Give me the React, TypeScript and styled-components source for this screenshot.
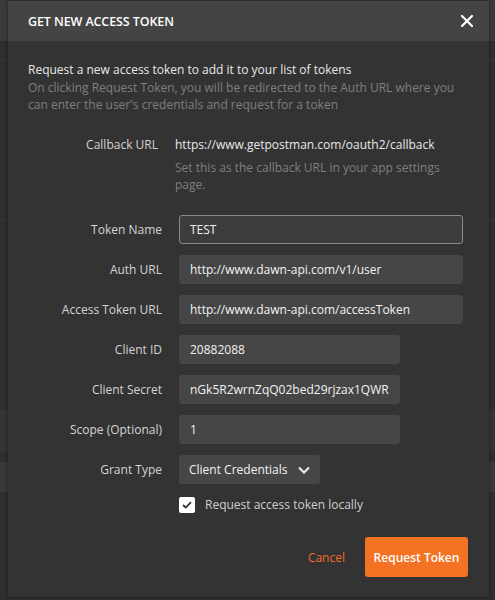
import styled, { createGlobalStyle } from 'styled-components';

const GlobalStyle = createGlobalStyle`
  html, body {
    margin: 0;
    padding: 0;
    height: 100%;
    background: #2c2c2c;
    font-family: 'Open Sans', 'Liberation Sans', sans-serif;
  }
  * { box-sizing: border-box; }
`;

// faint app behind the modal
const Backdrop = styled.div`
  position: relative;
  width: 495px;
  height: 600px;
  overflow: hidden;
  background:
    linear-gradient(#3a3a3a, #3a3a3a) 0 0 / 100% 41px no-repeat,
    linear-gradient(#383838, #383838) 0 60px / 100% 1px no-repeat,
    linear-gradient(#383838, #383838) 0 220px / 100% 1px no-repeat,
    linear-gradient(#343434, #343434) 0 410px / 100% 42px no-repeat,
    linear-gradient(#393939, #393939) 0 462px / 100% 30px no-repeat,
    #2e2e2e;
`;

const Modal = styled.div`
  position: absolute;
  top: 1px;
  left: 8px;
  width: 481px;
  height: 596px;
  background: #333333;
  box-shadow: 0 0 3px rgba(0, 0, 0, 0.5);
  display: flex;
  flex-direction: column;
`;

const Header = styled.header`
  height: 40px;
  background: #444444;
  display: flex;
  align-items: center;
  justify-content: space-between;
  padding: 0 14px 0 20px;
  color: #ffffff;
`;

const Title = styled.h1`
  margin: 0;
  font-size: 12.5px;
  font-weight: 600;
  letter-spacing: -0.1px;
`;

const Close = styled.button`
  border: 0;
  background: none;
  padding: 0;
  width: 16px;
  height: 16px;
  display: flex;
  align-items: center;
  justify-content: center;
  cursor: pointer;
`;

const Body = styled.div`
  padding: 20px 25px 20px 20px;
  display: flex;
  flex-direction: column;
  flex: 1;
`;

const Intro = styled.p`
  margin: 0;
  font-size: 12px;
  line-height: 18px;
  color: #e8e8e8;
`;

const Muted = styled.span<{ $gap?: number }>`
  display: block;
  color: #7f7f7f;
  margin-top: ${(p) => p.$gap ?? 0}px;
  line-height: 17px;
`;

const Form = styled.div`
  display: grid;
  grid-template-columns: 134px 1fr;
  column-gap: 17px;
  row-gap: 11px;
  align-items: center;
  margin-top: 23px;
`;

const Label = styled.div<{ $top?: boolean }>`
  text-align: right;
  font-size: 12px;
  color: #d4d4d4;
  align-self: ${(p) => (p.$top ? 'start' : 'center')};
  padding-right: ${(p) => (p.$top ? '4px' : '0')};
`;

const Callback = styled.div`
  margin-left: -4px;
  font-size: 12px;
  line-height: 18px;
  color: #e8e8e8;
  margin-bottom: 11px;
`;

const Input = styled.div<{ $width: number; $outlined?: boolean }>`
  width: ${(p) => p.$width}px;
  height: 29px;
  border-radius: 3px;
  background: ${(p) => (p.$outlined ? '#3c3c3c' : '#464646')};
  border: 1px solid ${(p) => (p.$outlined ? '#8a8a8a' : '#464646')};
  padding: 0 10px;
  display: flex;
  align-items: center;
  font-size: 12px;
  color: #f2f2f2;
  white-space: nowrap;
  overflow: hidden;
`;

const Select = styled.div`
  width: 141px;
  height: 29px;
  border-radius: 3px;
  background: #464646;
  padding: 0 10px;
  display: flex;
  align-items: center;
  justify-content: space-between;
  font-size: 12px;
  color: #f2f2f2;
`;

const CheckRow = styled.label`
  grid-column: 2;
  display: flex;
  align-items: center;
  gap: 10px;
  font-size: 12px;
  color: #cfcfcf;
  margin-top: 1px;
`;

const Box = styled.span`
  width: 16px;
  height: 16px;
  border-radius: 2px;
  background: #ffffff;
  display: flex;
  align-items: center;
  justify-content: center;
`;

const Footer = styled.div`
  margin-top: auto;
  display: flex;
  justify-content: flex-end;
  align-items: center;
  gap: 20px;
  margin-right: -4px;
`;

const LinkButton = styled.button`
  border: 0;
  background: none;
  padding: 0;
  font-family: inherit;
  font-size: 12px;
  color: #f26b2b;
  cursor: pointer;
`;

const Primary = styled.button`
  border: 0;
  border-radius: 3px;
  background: #f47224;
  color: #ffffff;
  font-family: inherit;
  font-size: 12px;
  font-weight: 600;
  width: 103px;
  height: 40px;
  cursor: pointer;
`;

const fields: { label: string; value: string; width: number; outlined?: boolean }[] = [
  { label: 'Token Name', value: 'TEST', width: 284, outlined: true },
  { label: 'Auth URL', value: 'http://www.dawn-api.com/v1/user', width: 284 },
  { label: 'Access Token URL', value: 'http://www.dawn-api.com/accessToken', width: 284 },
  { label: 'Client ID', value: '20882088', width: 221 },
  { label: 'Client Secret', value: 'nGk5R2wrnZqQ02bed29rjzax1QWR', width: 221 },
  { label: 'Scope (Optional)', value: '1', width: 221 },
];

function App() {
  return (
    <Backdrop>
      <GlobalStyle />
      <Modal>
        <Header>
          <Title>GET NEW ACCESS TOKEN</Title>
          <Close aria-label="Close">
            <svg width="12" height="12" viewBox="0 0 12 12">
              <path d="M1 1L11 11M11 1L1 11" stroke="#fff" strokeWidth="2.2" strokeLinecap="square" />
            </svg>
          </Close>
        </Header>
        <Body>
          <Intro>
            Request a new access token to add it to your list of tokens
            <Muted>
              On clicking Request Token, you will be redirected to the Auth URL where you can
              enter the user's credentials and request for a token
            </Muted>
          </Intro>
          <Form>
            <Label $top>Callback URL</Label>
            <Callback>
              https://www.getpostman.com/oauth2/callback
              <Muted $gap={5}>Set this as the callback URL in your app settings page.</Muted>
            </Callback>
            {fields.map((f) => (
              <>
                <Label key={f.label + 'l'}>{f.label}</Label>
                <Input key={f.label} $width={f.width} $outlined={f.outlined}>
                  {f.value}
                </Input>
              </>
            ))}
            <Label>Grant Type</Label>
            <Select>
              Client Credentials
              <svg width="12" height="8" viewBox="0 0 12 8">
                <path d="M1 1.5L6 6.5L11 1.5" stroke="#f2f2f2" strokeWidth="2" fill="none" />
              </svg>
            </Select>
            <CheckRow>
              <Box>
                <svg width="10" height="8" viewBox="0 0 10 8">
                  <path d="M1 4L3.8 6.6L9 1.2" stroke="#333" strokeWidth="1.8" fill="none" />
                </svg>
              </Box>
              Request access token locally
            </CheckRow>
          </Form>
          <Footer>
            <LinkButton>Cancel</LinkButton>
            <Primary>Request Token</Primary>
          </Footer>
        </Body>
      </Modal>
    </Backdrop>
  );
}

export default App;
